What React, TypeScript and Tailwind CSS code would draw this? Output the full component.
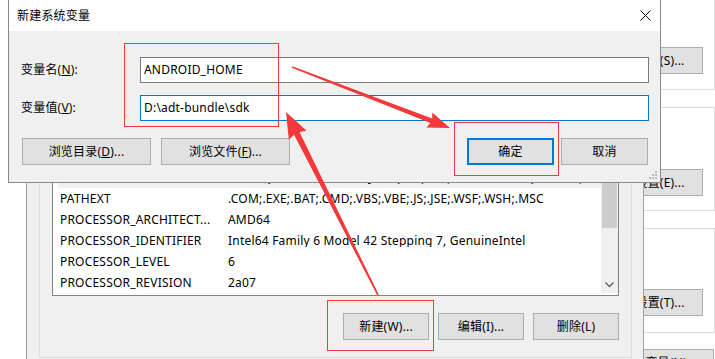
import React from 'react';

const btn = "flex items-center justify-center h-[27px] bg-[#e1e1e1] border border-[#adadad] whitespace-nowrap";

const envRows: [string, string][] = [
  ["NUMBER_OF_PROCESSORS", "4"],
  ["OS", "Windows_NT"],
  ["Path", "C:\\ProgramData\\Oracle\\Java\\javapath;C:\\Windows\\system32;C:\\Windows;C:\\Windows\\System32\\Wbem"],
  ["PATHEXT", ".COM;.EXE;.BAT;.CMD;.VBS;.VBE;.JS;.JSE;.WSF;.WSH;.MSC"],
  ["PROCESSOR_ARCHITECT...", "AMD64"],
  ["PROCESSOR_IDENTIFIER", "Intel64 Family 6 Model 42 Stepping 7, GenuineIntel"],
  ["PROCESSOR_LEVEL", "6"],
  ["PROCESSOR_REVISION", "2a07"],
];

// the "system properties" window peeking out on the right
const SystemProps = () => (
  <div className="absolute left-[540px] top-[-30px] w-[175px] flex flex-col bg-white">
    <div className="h-[120px] border border-[#dcdcdc] flex flex-col items-end pr-[11px]">
      <div className={`${btn} w-[86px] mt-[76px]`}>设置(S)...</div>
    </div>
    <div className="h-[104px] mt-[17px] border border-[#dcdcdc] flex flex-col items-end pr-[11px]">
      <div className={`${btn} w-[86px] mt-[61px]`}>设置(E)...</div>
    </div>
    <div className="h-[105px] mt-[17px] border border-[#dcdcdc] flex flex-col items-end pr-[11px]">
      <div className={`${btn} w-[86px] mt-[60px]`}>设置(T)...</div>
    </div>
    <div className="flex justify-end mt-[16px] pr-[1px]">
      <div className={`${btn} w-[110px]`}>环境变量(N)...</div>
    </div>
  </div>
);

const EnvWindow = () => (
  <div className="absolute left-[26px] top-0 w-[618px] h-[380px] border border-[#a0a0a0] bg-[#f0f0f0] pt-[99px] pl-[12px] pr-[11px]">
    <div className="border border-[#dcdcdc] pt-[23px] px-[12px] pb-[17px]">
      <div className="border border-[#828282] bg-white flex pb-[2px]">
        <div className="flex-1 pl-[5px] min-w-0">
          {envRows.map(([k, v]) => (
            <div key={k} className={`h-[21px] flex items-center whitespace-nowrap ${k === "Path" ? "bg-[#f0f0f0]" : ""}`}>
              <div className="w-[170px] shrink-0 pl-[2px] overflow-hidden">{k}</div>
              <div className="flex-1 overflow-hidden">{v}</div>
            </div>
          ))}
        </div>
        <div className="w-[17px] bg-[#f0f0f0] flex flex-col">
          <div className="h-[17px]" />
          <div className="h-[86px] mx-[1px] bg-[#cdcdcd]" />
          <div className="flex-1" />
          <div className="h-[17px] flex items-center justify-center">
            <svg width="9" height="6" viewBox="0 0 9 6">
              <polyline points="0.5,0.5 4.5,4.5 8.5,0.5" fill="none" stroke="#606060" strokeWidth="1.3" />
            </svg>
          </div>
        </div>
      </div>
      <div className="flex justify-end gap-[9px] mt-[17px]">
        <div className={`${btn} w-[86px]`}>新建(W)...</div>
        <div className={`${btn} w-[86px]`}>编辑(I)...</div>
        <div className={`${btn} w-[86px]`}>删除(L)</div>
      </div>
    </div>
  </div>
);

const NewVarDialog = () => (
  <div className="absolute left-[8px] top-[-1px] w-[653px] h-[184px] border border-[#8a8a8a] bg-[#f0f0f0] flex flex-col">
    <div className="h-[31px] bg-white flex items-center justify-between pl-[8px] pr-[9px]">
      <span>新建系统变量</span>
      <svg width="11" height="11" viewBox="0 0 11 11">
        <path d="M0.5 0.5 L10.5 10.5 M10.5 0.5 L0.5 10.5" stroke="#000" strokeWidth="1" />
      </svg>
    </div>
    <div className="relative flex-1 pt-[26px] pl-[12px] pr-[11px]">
      <div className="flex items-center">
        <div className="w-[119px]">变量名(<span className="underline">N</span>):</div>
        <div className="w-[509px] h-[26px] border border-[#7a7a7a] bg-white px-[3px] flex items-center">ANDROID_HOME</div>
      </div>
      <div className="flex items-center mt-[12px]">
        <div className="w-[119px]">变量值(<span className="underline">V</span>):</div>
        <div className="w-[509px] h-[26px] border border-[#0078d7] bg-white px-[3px] flex items-center">D:\adt-bundle\sdk</div>
      </div>
      <div className="flex items-center mt-[17px] pl-[1px] pr-[1px]">
        <div className={`${btn} w-[129px]`}>浏览目录(<span className="underline">D</span>)...</div>
        <div className={`${btn} w-[129px] ml-[10px]`}>浏览文件(<span className="underline">F</span>)...</div>
        <div className="flex items-center justify-center h-[27px] w-[87px] ml-auto bg-[#e1e1e1] border-2 border-[#0078d7]">确定</div>
        <div className={`${btn} w-[87px] ml-[7px]`}>取消</div>
      </div>
      <svg className="absolute right-[2px] bottom-[2px]" width="9" height="9" viewBox="0 0 9 9">
        <g fill="#b8b8b8">
          <rect x="6" y="0" width="2" height="2" />
          <rect x="3" y="3" width="2" height="2" />
          <rect x="6" y="3" width="2" height="2" />
          <rect x="0" y="6" width="2" height="2" />
          <rect x="3" y="6" width="2" height="2" />
          <rect x="6" y="6" width="2" height="2" />
        </g>
      </svg>
    </div>
  </div>
);

// red boxes and arrows drawn over the screenshot
const Annotations = () => (
  <svg className="absolute inset-0 pointer-events-none" width="715" height="359" viewBox="0 0 715 359">
    <g fill="none" stroke="#f03c3c" strokeWidth="1">
      <rect x="124.5" y="43.5" width="154" height="83" />
      <rect x="454.5" y="122.5" width="104" height="53" />
      <rect x="327.5" y="300.5" width="106" height="50" />
    </g>
    <g fill="#f4393a">
      <polygon points="292.25,66.35 432.2,118.5 432.3,112.6 450,128 426.5,127.6 430.4,123.1 291.75,67.65" />
      <polygon points="378.7,294.6 299.5,132.1 306.6,130.7 286,112 288.8,139.7 294.1,134.8 377.3,295.4" />
    </g>
  </svg>
);

export default function App() {
  return (
    <div className="relative w-[715px] h-[359px] overflow-hidden bg-white text-[12px] leading-none tracking-[0.2px] text-black font-['Noto_Sans','Noto_Sans_CJK_SC',sans-serif]">
      <SystemProps />
      <EnvWindow />
      <NewVarDialog />
      <Annotations />
    </div>
  );
}
